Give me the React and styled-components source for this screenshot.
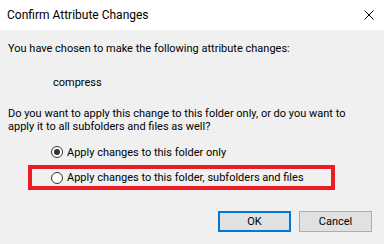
import React from "react";
import styled, { createGlobalStyle } from "styled-components";

const GlobalStyle = createGlobalStyle`
  html, body {
    margin: 0;
    padding: 0;
    background: #f0f0f0;
  }
  body {
    font-family: Roboto, "Liberation Sans", sans-serif;
    font-size: 11px;
    color: #000;
  }
`;

const Dialog = styled.div`
  width: 384px;
  height: 244px;
  display: flex;
  flex-direction: column;
  overflow: hidden;
`;

const TitleBar = styled.div`
  height: 30px;
  background: #fff;
  display: flex;
  align-items: center;
  justify-content: space-between;
  padding-left: 7px;
  padding-right: 10px;
  flex-shrink: 0;
  line-height: 14px;
`;

const Title = styled.span`
  font-size: 12px;
`;

const CloseButton = styled.div`
  width: 10px;
  height: 10px;
  display: flex;
  margin-top: -1px;
`;

const Body = styled.div`
  flex: 1;
  background: #f0f0f0;
  padding: 12px 8px 0 8px;
  display: flex;
  flex-direction: column;
`;

const Text = styled.p`
  margin: 0;
  line-height: 13px;
  margin-top: ${(p) => p.top || 0}px;
  padding-left: ${(p) => p.indent || 0}px;
`;

const Options = styled.div`
  margin-top: 9px;
  margin-left: 43px;
  display: flex;
  flex-direction: column;
  gap: 3px;
`;

const RadioRow = styled.label`
  display: flex;
  align-items: center;
  gap: 4px;
  line-height: 13px;
  height: ${(p) => (p.highlighted ? 17 : 20)}px;
  ${(p) =>
    p.highlighted &&
    `
    border: 4px solid #ed1c24;
    margin-left: -23px;
    padding-left: 19px;
    width: 280px;
  `}
`;

const RadioCircle = styled.span`
  box-sizing: border-box;
  width: 12px;
  height: 12px;
  border: 1px solid #333;
  border-radius: 50%;
  background: #fff;
  display: flex;
  align-items: center;
  justify-content: center;
  flex-shrink: 0;

  &::after {
    content: "";
    width: 6px;
    height: 6px;
    border-radius: 50%;
    background: ${(p) => (p.checked ? "#333" : "transparent")};
  }
`;

const Footer = styled.div`
  margin-top: auto;
  margin-bottom: 12px;
  display: flex;
  justify-content: flex-end;
  gap: 8px;
  padding-right: 4px;
`;

const Button = styled.button`
  width: 73px;
  height: 21px;
  box-sizing: border-box;
  font-family: inherit;
  font-size: 11px;
  background: #e1e1e1;
  border: ${(p) => (p.primary ? "2px solid #0078d7" : "1px solid #adadad")};
  padding: 0;
  color: #000;
`;

export default function App() {
  return (
    <Dialog>
      <GlobalStyle />
      <TitleBar>
        <Title>Confirm Attribute Changes</Title>
        <CloseButton>
          <svg width="10" height="10" viewBox="0 0 10 10">
            <path d="M0.5 0.5 L9.5 9.5 M9.5 0.5 L0.5 9.5" stroke="#000" strokeWidth="1" />
          </svg>
        </CloseButton>
      </TitleBar>
      <Body>
        <Text>You have chosen to make the following attribute changes:</Text>
        <Text top={21} indent={45}>
          compress
        </Text>
        <Text top={18}>
          Do you want to apply this change to this folder only, or do you want to
          <br />
          apply it to all subfolders and files as well?
        </Text>
        <Options>
          <RadioRow>
            <RadioCircle checked />
            Apply changes to this folder only
          </RadioRow>
          <RadioRow highlighted>
            <RadioCircle />
            Apply changes to this folder, subfolders and files
          </RadioRow>
        </Options>
        <Footer>
          <Button primary>OK</Button>
          <Button>Cancel</Button>
        </Footer>
      </Body>
    </Dialog>
  );
}
